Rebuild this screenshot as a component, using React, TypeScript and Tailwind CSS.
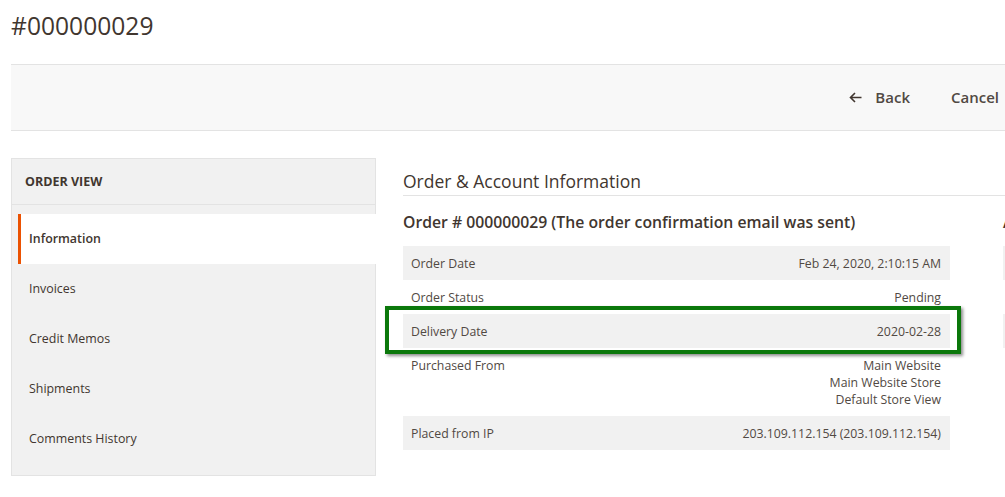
import React from 'react';

const navItems = ['Information', 'Invoices', 'Credit Memos', 'Shipments', 'Comments History'];

type Row = { label: string; value: string[] };

const orderRows: Row[] = [
  { label: 'Order Date', value: ['Feb 24, 2020, 2:10:15 AM'] },
  { label: 'Order Status', value: ['Pending'] },
  { label: 'Delivery Date', value: ['2020-02-28'] },
  { label: 'Purchased From', value: ['Main Website', 'Main Website Store', 'Default Store View'] },
  { label: 'Placed from IP', value: ['203.109.112.154 (203.109.112.154)'] },
];

const accountRows: Row[] = [
  { label: 'Customer Name', value: ['Veronica Costello'] },
  { label: 'Email', value: ['roni_cost@example.com'] },
  { label: 'Customer Group', value: ['General'] },
];

function InfoTable({ rows }: { rows: Row[] }) {
  return (
    <div className="flex flex-col text-[12.3px] text-[#514943]">
      {rows.map((r, i) => (
        <div
          key={r.label}
          className={`flex justify-between pl-[8px] pr-[9px] ${i % 2 === 0 ? 'bg-[#f1f1f1]' : 'bg-white'} ${
            r.value.length > 1 ? 'pt-[9px] pb-[8px] leading-[17px]' : 'h-[34px] items-center leading-[17px]'
          }`}
        >
          <span>{r.label}</span>
          <div className="flex flex-col items-end text-right">
            {r.value.map((v) => (
              <span key={v}>{v}</span>
            ))}
          </div>
        </div>
      ))}
    </div>
  );
}

export default function App() {
  return (
    <div className="relative w-[1005px] h-[497px] overflow-hidden bg-white text-[#41362f] font-['Open_Sans','Liberation_Sans',sans-serif]">
      {/* page title */}
      <div className="h-[64px] pl-[11px] pt-[8px] text-[24.6px] leading-[36px] font-normal">#000000029</div>

      {/* action bar */}
      <div className="ml-[11px] h-[67px] bg-[#f8f8f8] border-y border-[#e3e3e3] flex items-center justify-end pr-[6px] text-[15px] font-semibold text-[#514943]">
        <button className="flex items-center gap-[13px] mr-[41px]">
          <svg width="13" height="11" viewBox="0 0 13 11" fill="none" stroke="#41362f" strokeWidth="1.6">
            <path d="M12.5 5.5H1.5M6 1L1.5 5.5L6 10" />
          </svg>
          <span>Back</span>
        </button>
        <button>Cancel</button>
      </div>

      <div className="flex mt-[27px]">
        {/* sidebar */}
        <aside className="ml-[11px] w-[365px] h-[318px] bg-[#f1f1f1] border border-[#e3e3e3] shrink-0">
          <div className="h-[46px] flex items-center pl-[13px] pt-[2px] border-b border-[#e3e3e3] text-[12.5px] font-bold uppercase text-[#41362f]">
            Order View
          </div>
          <ul className="mt-[8px] ml-[6px] pt-[1px]">
            {navItems.map((item, i) =>
              i === 0 ? (
                <li
                  key={item}
                  className="h-[50px] -mr-px flex items-center bg-white border-l-[3px] border-[#eb5202] pl-[8px] text-[12.4px] font-semibold text-[#41362f]"
                >
                  {item}
                </li>
              ) : (
                <li key={item} className="h-[50px] flex items-center pl-[11px] text-[12.4px] text-[#41362f]">
                  {item}
                </li>
              )
            )}
          </ul>
        </aside>

        {/* main content */}
        <main className="ml-[27px] w-[1200px] shrink-0">
          <div className="pt-[11px] pb-[2px] text-[17.5px] leading-[24px] font-normal border-b border-[#e3e3e3]">
            Order &amp; Account Information
          </div>
          <div className="flex gap-[53px] mt-[16px]">
            <section className="w-[547px]">
              <h2 className="text-[15.75px] leading-[20px] font-semibold mb-[14px]">
                Order # 000000029 (The order confirmation email was sent)
              </h2>
              <InfoTable rows={orderRows} />
            </section>
            <section className="w-[547px]">
              <h2 className="text-[15.75px] leading-[20px] font-semibold mb-[14px]">Account Information</h2>
              <InfoTable rows={accountRows} />
            </section>
          </div>
        </main>
      </div>

      {/* highlight annotation */}
      <div className="absolute left-[385px] top-[306px] w-[576px] h-[48px] border-4 border-[#0b780b] shadow-[2px_2px_3px_rgba(0,0,0,0.45)] pointer-events-none" />
    </div>
  );
}
